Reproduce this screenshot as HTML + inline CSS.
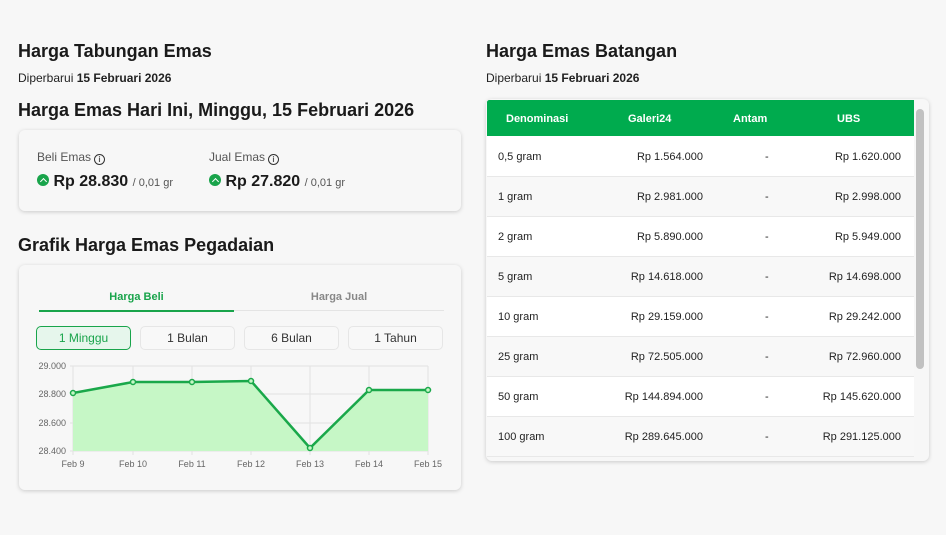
<!DOCTYPE html>
<html><head><meta charset="utf-8"><style>
*{box-sizing:border-box;margin:0;padding:0}
body{width:946px;height:535px;background:#f7f7f7;font-family:"Liberation Sans",sans-serif;color:#1a1a1a;position:relative;overflow:hidden}
.a{position:absolute}
h2{font-size:18px;font-weight:bold;position:absolute;white-space:nowrap}
.sub{font-size:12px;position:absolute;color:#222}
.card{position:absolute;background:#f7f7f7;border-radius:6px;box-shadow:0 1px 4px rgba(0,0,0,.18)}
.lbl{font-size:12px;color:#555}
.ico{display:inline-block;width:11px;height:11px;border:1.3px solid #333;border-radius:50%;font-size:8px;text-align:center;line-height:9px;font-weight:bold;vertical-align:-1px;margin-left:3px}
.up{display:inline-block;width:12px;height:12px;background:#19a44b;border-radius:50%;vertical-align:0px;position:relative}
.up:after{content:"";position:absolute;left:3.5px;top:4.5px;width:4px;height:4px;border-left:1.5px solid #fff;border-top:1.5px solid #fff;transform:rotate(45deg)}
.price{font-size:16px;font-weight:bold}
.unit{font-size:11px;color:#555;font-weight:normal}
.btn{position:absolute;top:326px;height:24px;width:95px;border:1px solid #e6e6e6;border-radius:5px;font-size:12px;text-align:center;line-height:22px;color:#333;background:#f8f8f8}
table{border-collapse:collapse;font-size:11px;table-layout:fixed}
td{height:40px;border-bottom:1px solid #e8e8e8;color:#222;padding-top:2px;white-space:nowrap}
th{height:36px;background:#00ab4e;color:#fff;font-size:11px;font-weight:bold;text-align:left;padding-top:1px}
tr:nth-child(even) td{background:#fff}
tr:nth-child(odd) td{background:#f8f8f8}
td:nth-child(1){padding-left:11px}
td:nth-child(2){text-align:right}
td:nth-child(3){padding-left:62px}
td:nth-child(4){text-align:right;padding-right:13px}
</style></head><body>
<h2 style="left:18px;top:41px">Harga Tabungan Emas</h2>
<div class="sub" style="left:18px;top:71px">Diperbarui <b>15 Februari 2026</b></div>
<h2 style="left:18px;top:100px">Harga Emas Hari Ini, Minggu, 15 Februari 2026</h2>
<div class="card" style="left:19px;top:130px;width:442px;height:81px">
 <div class="a lbl" style="left:18px;top:20px">Beli Emas<span class="ico">i</span></div>
 <div class="a" style="left:18px;top:43px"><span class="up"></span> <span class="price">Rp 28.830</span> <span class="unit">/ 0,01 gr</span></div>
 <div class="a lbl" style="left:190px;top:20px">Jual Emas<span class="ico">i</span></div>
 <div class="a" style="left:190px;top:43px"><span class="up"></span> <span class="price">Rp 27.820</span> <span class="unit">/ 0,01 gr</span></div>
</div>
<h2 style="left:18px;top:235px">Grafik Harga Emas Pegadaian</h2>
<div class="card" style="left:19px;top:265px;width:442px;height:225px"></div>
<div class="a" style="left:39px;top:291px;width:195px;text-align:center;font-size:11px;font-weight:bold;color:#19a44b">Harga Beli</div>
<div class="a" style="left:234px;top:291px;width:210px;text-align:center;font-size:11px;font-weight:bold;color:#888">Harga Jual</div>
<div class="a" style="left:39px;top:310px;width:405px;height:1px;background:#e4e4e4"></div>
<div class="a" style="left:39px;top:310px;width:195px;height:2px;background:#19a44b"></div>
<div class="btn" style="left:36px;border-color:#19a44b;background:#e6f6ec;color:#19a44b">1 Minggu</div>
<div class="btn" style="left:140px">1 Bulan</div>
<div class="btn" style="left:244px">6 Bulan</div>
<div class="btn" style="left:348px">1 Tahun</div>
<svg class="a" style="left:0;top:0" width="470" height="480">
<g stroke="#e2e2e2" stroke-width="1">
<line x1="70" y1="366" x2="428" y2="366"/><line x1="70" y1="394" x2="428" y2="394"/><line x1="70" y1="423" x2="428" y2="423"/><line x1="70" y1="451" x2="428" y2="451"/>
<line x1="73" y1="366" x2="73" y2="455"/><line x1="133" y1="366" x2="133" y2="455"/><line x1="192" y1="366" x2="192" y2="455"/><line x1="251" y1="366" x2="251" y2="455"/><line x1="310" y1="366" x2="310" y2="455"/><line x1="369" y1="366" x2="369" y2="455"/><line x1="428" y1="366" x2="428" y2="455"/>
</g>
<path d="M73 393L133 382L192 382L251 381L310 448L369 390L428 390L428 451L73 451Z" fill="#c6f7c6"/>
<path d="M73 393L133 382L192 382L251 381L310 448L369 390L428 390" fill="none" stroke="#1aa84a" stroke-width="2.5"/>
<g fill="#c6f7c6" stroke="#1aa84a" stroke-width="1.5">
<circle cx="73" cy="393" r="2.5"/><circle cx="133" cy="382" r="2.5"/><circle cx="192" cy="382" r="2.5"/><circle cx="251" cy="381" r="2.5"/><circle cx="310" cy="448" r="2.5"/><circle cx="369" cy="390" r="2.5"/><circle cx="428" cy="390" r="2.5"/></g>
<g font-family="Liberation Sans" font-size="9" fill="#666">
<text x="66" y="369" text-anchor="end">29.000</text><text x="66" y="397" text-anchor="end">28.800</text><text x="66" y="426" text-anchor="end">28.600</text><text x="66" y="454" text-anchor="end">28.400</text>
<g text-anchor="middle"><text x="73" y="467">Feb 9</text><text x="133" y="467">Feb 10</text><text x="192" y="467">Feb 11</text><text x="251" y="467">Feb 12</text><text x="310" y="467">Feb 13</text><text x="369" y="467">Feb 14</text><text x="428" y="467">Feb 15</text></g></g>
</svg>
<h2 style="left:486px;top:41px">Harga Emas Batangan</h2>
<div class="sub" style="left:486px;top:71px">Diperbarui <b>15 Februari 2026</b></div>
<div class="card" style="left:486px;top:99px;width:443px;height:362px;overflow:hidden">
<table class="a" style="left:1px;top:1px;width:427px">
<colgroup><col style="width:128px"><col style="width:88px"><col style="width:90px"><col style="width:121px"></colgroup>
<tr><th style="padding-left:19px">Denominasi</th><th style="padding-left:13px">Galeri24</th><th style="padding-left:30px">Antam</th><th style="padding-left:44px">UBS</th></tr>
<tr><td>0,5 gram</td><td>Rp 1.564.000</td><td>-</td><td>Rp 1.620.000</td></tr>
<tr><td>1 gram</td><td>Rp 2.981.000</td><td>-</td><td>Rp 2.998.000</td></tr>
<tr><td>2 gram</td><td>Rp 5.890.000</td><td>-</td><td>Rp 5.949.000</td></tr>
<tr><td>5 gram</td><td>Rp 14.618.000</td><td>-</td><td>Rp 14.698.000</td></tr>
<tr><td>10 gram</td><td>Rp 29.159.000</td><td>-</td><td>Rp 29.242.000</td></tr>
<tr><td>25 gram</td><td>Rp 72.505.000</td><td>-</td><td>Rp 72.960.000</td></tr>
<tr><td>50 gram</td><td>Rp 144.894.000</td><td>-</td><td>Rp 145.620.000</td></tr>
<tr><td>100 gram</td><td>Rp 289.645.000</td><td>-</td><td>Rp 291.125.000</td></tr>
</table>
<div class="a" style="left:430px;top:10px;width:8px;height:260px;background:#c1c1c1;border-radius:4px"></div>
</div>
</body></html>
